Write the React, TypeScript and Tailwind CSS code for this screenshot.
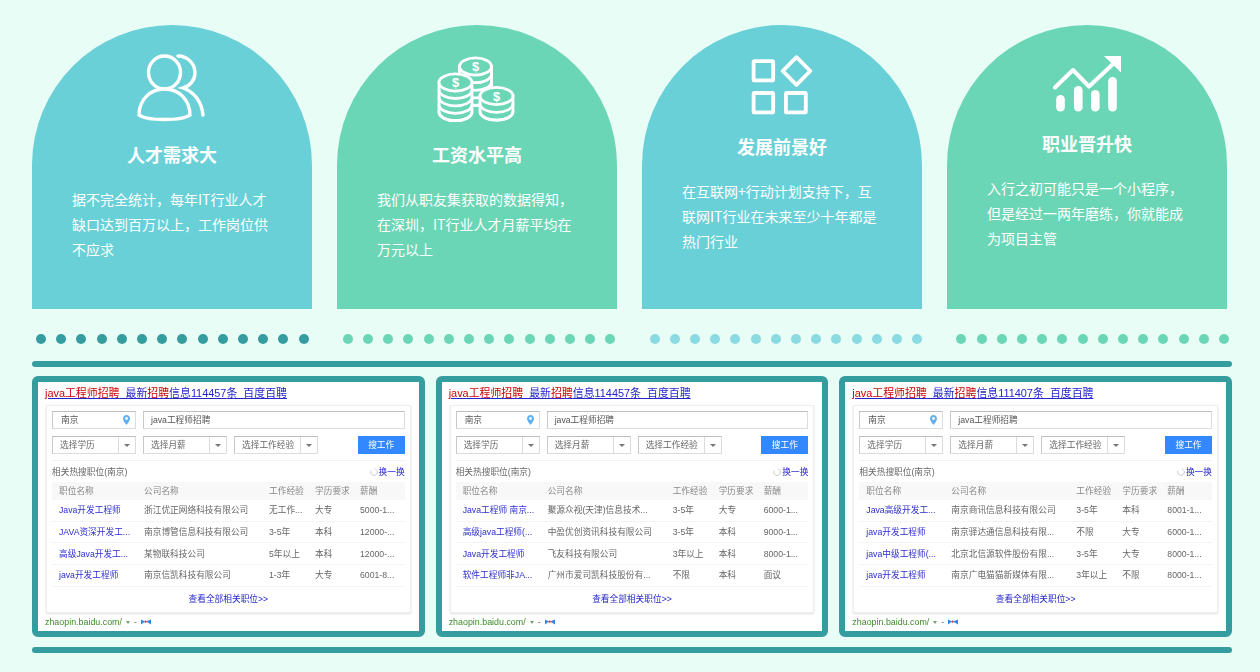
import React from 'react';

const features = [
    { title: '人才需求大', lines: ['据不完全统计，每年IT行业人才', '缺口达到百万以上，工作岗位供', '不应求'], icon: 'people', bg: 'bg-[#6ad0d7]', titleGap: 'mt-[12px]' },
    { title: '工资水平高', lines: ['我们从职友集获取的数据得知，', '在深圳，IT行业人才月薪平均在', '万元以上'], icon: 'coins', bg: 'bg-[#6bd6b5]', titleGap: 'mt-[12px]' },
    { title: '发展前景好', lines: ['在互联网+行动计划支持下，互', '联网IT行业在未来至少十年都是', '热门行业'], icon: 'apps', bg: 'bg-[#6ad0d7]', titleGap: 'mt-[9px]' },
    { title: '职业晋升快', lines: ['入行之初可能只是一个小程序，', '但是经过一两年磨练，你就能成', '为项目主管'], icon: 'chart', bg: 'bg-[#6bd6b5]', titleGap: 'mt-[6px]' },
];

const dotRows = ['bg-[#359ca0]', 'bg-[#6bd6b5]', 'bg-[#8adbe1]', 'bg-[#6bd6b5]'];

const panels = [
    {
        count: '114457',
        rows: [
            ['Java开发工程师', '浙江优正网络科技有限公司', '无工作...', '大专', '5000-1...'],
            ['JAVA资深开发工...', '南京博管信息科技有限公司', '3-5年', '本科', '12000-...'],
            ['高级Java开发工...', '某物联科技公司', '5年以上', '本科', '12000-...'],
            ['java开发工程师', '南京信凯科技有限公司', '1-3年', '大专', '6001-8...'],
        ],
    },
    {
        count: '114457',
        rows: [
            ['Java工程师 南京...', '聚源众视(天津)信息技术...', '3-5年', '大专', '6000-1...'],
            ['高级java工程师(...', '中盈优创资讯科技有限公司', '3-5年', '本科', '9000-1...'],
            ['Java开发工程师', '飞友科技有限公司', '3年以上', '本科', '8000-1...'],
            ['软件工程师非JA...', '广州市爱司凯科技股份有...', '不限', '本科', '面议'],
        ],
    },
    {
        count: '111407',
        rows: [
            ['Java高级开发工...', '南京商讯信息科技有限公司', '3-5年', '本科', '8001-1...'],
            ['java开发工程师', '南京驿达通信息科技有限...', '不限', '大专', '6000-1...'],
            ['java中级工程师(...', '北京北信源软件股份有限...', '3-5年', '大专', '8000-1...'],
            ['java开发工程师', '南京广电猫猫新媒体有限...', '3年以上', '不限', '8000-1...'],
        ],
    },
];

function PeopleIcon() {
    return (
        <svg width="104" height="85" viewBox="0 0 104 85" fill="none" stroke="#fff" strokeWidth="3.4" strokeLinecap="round">
            <ellipse cx="44.5" cy="27.5" rx="16" ry="16.5" />
            <path d="M19 70 C19 55 30 44 44.5 44 C59 44 70 55 70 70 C62 76 27 76 19 70 Z" />
            <path d="M58 11 C68 11 75 19 75 28 C75 35 70 41 63 43 C75 47 82 58 83 70" />
        </svg>
    );
}

function CoinStack({ cx, top, rx, layers, step }: { cx: number; top: number; rx: number; layers: number; step: number }) {
    const ry = 8.6;
    const bottom = top + step * layers;
    return (
        <g>
            <path d={`M${cx - rx} ${top} V${bottom} A${rx} ${ry} 0 0 0 ${cx + rx} ${bottom} V${top} Z`} fill="#6bd6b5" />
            {Array.from({ length: layers }).map((_, i) => (
                <path key={i} d={`M${cx - rx} ${top + step * (i + 1)} A${rx} ${ry} 0 0 0 ${cx + rx} ${top + step * (i + 1)}`} />
            ))}
            <ellipse cx={cx} cy={top} rx={rx} ry={ry} fill="#6bd6b5" />
            <text x={cx} y={top + 4.5} textAnchor="middle" fontSize="13" fontWeight="700" fontFamily="Liberation Sans" fill="#fff" stroke="none">$</text>
        </g>
    );
}

function CoinsIcon() {
    return (
        <svg width="104" height="85" viewBox="0 0 104 85" fill="none" stroke="#fff" strokeWidth="2.8" strokeLinecap="round">
            <CoinStack cx={50.5} top={21.5} rx={16} layers={4} step={7.6} />
            <CoinStack cx={30.5} top={37.5} rx={16.5} layers={4} step={7.4} />
            <CoinStack cx={71.5} top={51} rx={16.5} layers={2} step={7.8} />
        </svg>
    );
}

function AppsIcon() {
    return (
        <svg width="95" height="80" viewBox="0 0 95 80" fill="none" stroke="#fff" strokeWidth="3.8" strokeLinejoin="round">
            <rect x="18.6" y="16.2" width="19.6" height="19.2" rx="1" />
            <path d="M61.5 12.2 L75.3 26 L61.5 39.8 L47.7 26 Z" />
            <rect x="18.6" y="48" width="19.6" height="19.4" rx="1" />
            <rect x="50.9" y="48" width="19.9" height="19.4" rx="1" />
        </svg>
    );
}

function ChartIcon() {
    return (
        <svg width="95" height="80" viewBox="0 0 95 80" fill="none">
            <path d="M15 42.5 L33 25 L49 41.5 L72 20" stroke="#fff" strokeWidth="4" strokeLinecap="round" strokeLinejoin="round" />
            <path d="M64 11 H81 V27.5 Z" fill="#fff" />
            <rect x="16.2" y="50" width="8.6" height="16.5" rx="4.3" fill="#fff" />
            <rect x="34" y="41" width="8.6" height="25.5" rx="4.3" fill="#fff" />
            <rect x="51" y="45" width="8.6" height="21.5" rx="4.3" fill="#fff" />
            <rect x="68.2" y="32" width="8.6" height="34.5" rx="4.3" fill="#fff" />
        </svg>
    );
}

function FeatureIcon({ name }: { name: string }) {
    if (name === 'people') return <PeopleIcon />;
    if (name === 'coins') return <CoinsIcon />;
    if (name === 'apps') return <AppsIcon />;
    return <ChartIcon />;
}

function SelectBox({ label }: { label: string }) {
    return (
        <div className="w-[84px] h-[18px] flex items-center border border-[#dcdcdc] border-t-[#bdbdbd] border-l-[#c8c8c8]">
            <span className="flex-1 pl-[7px] text-[#666]">{label}</span>
            <span className="w-[17px] h-full flex items-center justify-center border-l border-[#dcdcdc]">
                <span className="w-0 h-0 border-x-[3px] border-x-transparent border-t-[3px] border-t-[#777]" />
            </span>
        </div>
    );
}

function Panel({ count, rows }: { count: string; rows: string[][] }) {
    return (
        <div className="h-[261px] border-[6px] border-[#359ca0] rounded-[6px] bg-white">
            {/* the picture inside is a scaled screenshot, hence the slight blur */}
            <div className="h-full flex flex-col blur-[0.3px]">
                <div className="h-[23px] pl-[7px] pt-[4px] text-[10.9px] leading-[14px] underline whitespace-nowrap text-[#2525cc]">
                    <span className="text-[#cc0000]">java工程师招聘</span>_最新<span className="text-[#cc0000]">招聘</span>信息{count}条_百度百聘
                </div>
                <div className="mx-[8px] h-[208px] border border-[#eeeeee] shadow-[0_1px_2px_rgba(0,0,0,0.12)] px-[5px] pt-[5px] flex flex-col">
                    <div className="flex gap-[7px]">
                        <div className="w-[84px] h-[18px] flex items-center justify-between pl-[8px] pr-[5px] border border-[#dcdcdc] border-t-[#bdbdbd] border-l-[#c8c8c8] text-[#555]">
                            南京
                            <svg width="7" height="10" viewBox="0 0 7 10">
                                <path d="M3.5 0 C1.5 0 0 1.6 0 3.5 C0 6 3.5 10 3.5 10 C3.5 10 7 6 7 3.5 C7 1.6 5.5 0 3.5 0 Z" fill="#5fb0f2" />
                                <circle cx="3.5" cy="3.5" r="1.4" fill="#fff" />
                            </svg>
                        </div>
                        <div className="flex-1 h-[18px] flex items-center pl-[7px] border border-[#dcdcdc] border-t-[#bdbdbd] border-l-[#c8c8c8] text-[#555]">java工程师招聘</div>
                    </div>
                    <div className="flex gap-[7px] mt-[7px] pb-[6px] border-b border-[#f2f2f2]">
                        <SelectBox label="选择学历" />
                        <SelectBox label="选择月薪" />
                        <SelectBox label="选择工作经验" />
                        <div className="ml-auto w-[47px] h-[18px] flex items-center justify-center bg-[#3388ff] text-white">搜工作</div>
                    </div>
                    <div className="h-[21px] flex items-center justify-between text-[#666]">
                        相关热搜职位(南京)
                        <span className="flex items-center gap-[1px] text-[#2525cc]">
                            <svg width="8" height="8" viewBox="0 0 8 8" fill="none" stroke="#c4c4c4" strokeWidth="0.9">
                                <path d="M4.6 0.8 A3.3 3.3 0 1 1 1.2 2.4" />
                            </svg>
                            换一换
                        </span>
                    </div>
                    <div className="h-[18px] grid grid-cols-[85px_125px_46px_45px_1fr] items-center bg-[#f8f8f8] text-[#888] pl-[7px]">
                        <span>职位名称</span>
                        <span>公司名称</span>
                        <span>工作经验</span>
                        <span>学历要求</span>
                        <span>薪酬</span>
                    </div>
                    {rows.map((row, i) => (
                        <div key={i} className="h-[21.7px] grid grid-cols-[85px_125px_46px_45px_1fr] items-center border-b border-[#f3f3f3] text-[#666] pl-[7px] whitespace-nowrap">
                            <span className="text-[#2d2dcc]">{row[0]}</span>
                            <span>{row[1]}</span>
                            <span>{row[2]}</span>
                            <span>{row[3]}</span>
                            <span>{row[4]}</span>
                        </div>
                    ))}
                    <div className="flex-1 flex items-center justify-center text-[#2525cc]">查看全部相关职位&gt;&gt;</div>
                </div>
                <div className="pl-[7px] h-[18px] flex items-center gap-[4px] text-[#3d8b2a]">
                    <span className="text-[8.9px]">zhaopin.baidu.com/</span>
                    <span className="w-0 h-0 border-x-[2.5px] border-x-transparent border-t-[3px] border-t-[#6aa86a]" />
                    <span className="text-[#666]">-</span>
                    <svg width="10" height="6" viewBox="0 0 10 6">
                        <path d="M0 0.5 L4 2.5 L0 5.5 Z" fill="#2f86e8" />
                        <path d="M10 0.5 L5 2.5 L10 5.5 Z" fill="#2f86e8" />
                        <circle cx="4.6" cy="2.7" r="1.1" fill="#d8322e" />
                    </svg>
                </div>
            </div>
        </div>
    );
}

export default function App() {
    return (
        <div className="w-[1260px] h-[672px] overflow-hidden bg-[#e8fdf6] pl-[32px] pr-[28px] pt-[25px] font-['Liberation_Sans','Noto_Sans_CJK_SC',sans-serif]">
            <div className="flex gap-[25px]">
                {features.map((f) => (
                    <div key={f.title} className={`w-[280px] h-[284px] rounded-t-[140px] ${f.bg} flex flex-col items-center pt-[20px] text-white`}>
                        <FeatureIcon name={f.icon} />
                        <h3 className={`${f.titleGap} text-[18px] leading-[25px] font-bold font-['Noto_Sans_CJK_SC',sans-serif]`}>{f.title}</h3>
                        <div className="mt-[20px] w-[200px] text-[14px] leading-[25px] whitespace-nowrap font-['Noto_Sans_CJK_SC',sans-serif]">
                            {f.lines.map((line) => (
                                <p key={line}>{line}</p>
                            ))}
                        </div>
                    </div>
                ))}
            </div>

            <div className="flex gap-[34px] pl-[4px] mt-[25px]">
                {dotRows.map((color, i) => (
                    <div key={i} className="w-[272.8px] flex justify-between">
                        {Array.from({ length: 14 }).map((_, j) => (
                            <span key={j} className={`w-[10px] h-[10px] rounded-full ${color}`} />
                        ))}
                    </div>
                ))}
            </div>

            <div className="mt-[17px] h-[6px] rounded-full bg-[#359ca0]" />

            <div className="mt-[9px] grid grid-cols-3 gap-[11px] text-[8.7px] leading-[12px]">
                {panels.map((p, i) => (
                    <Panel key={i} count={p.count} rows={p.rows} />
                ))}
            </div>

            <div className="mt-[10px] h-[6px] rounded-full bg-[#359ca0]" />
        </div>
    );
}
